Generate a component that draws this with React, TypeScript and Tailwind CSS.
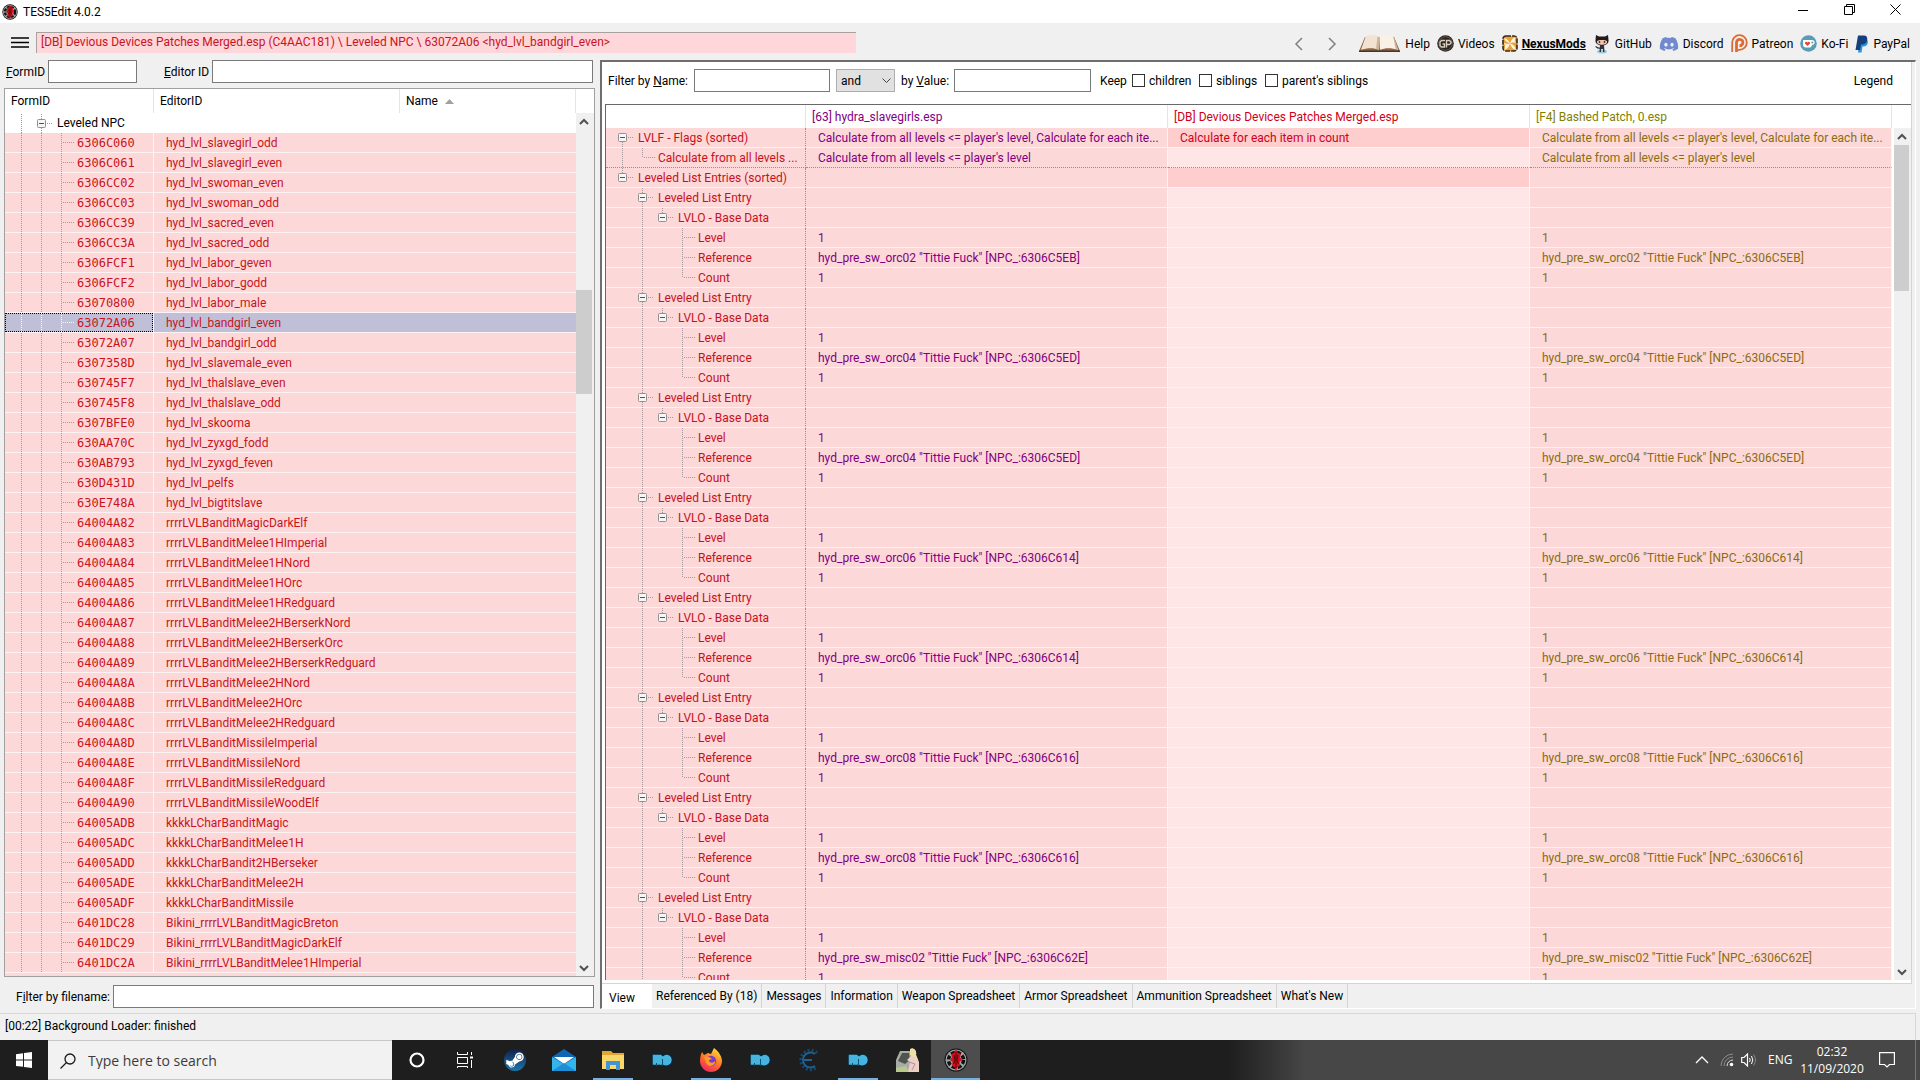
import React from "react";
import clsx from "clsx";
import { FaDiscord, FaSteamSymbol } from "react-icons/fa";

type GuideKind = "blank" | "line" | "tee" | "corner" | "box" | "boxLine" | "boxFirst";

const leveledNpcs: [string, string][] = [
  ["6306C060", "hyd_lvl_slavegirl_odd"],
  ["6306C061", "hyd_lvl_slavegirl_even"],
  ["6306CC02", "hyd_lvl_swoman_even"],
  ["6306CC03", "hyd_lvl_swoman_odd"],
  ["6306CC39", "hyd_lvl_sacred_even"],
  ["6306CC3A", "hyd_lvl_sacred_odd"],
  ["6306FCF1", "hyd_lvl_labor_geven"],
  ["6306FCF2", "hyd_lvl_labor_godd"],
  ["63070800", "hyd_lvl_labor_male"],
  ["63072A06", "hyd_lvl_bandgirl_even"],
  ["63072A07", "hyd_lvl_bandgirl_odd"],
  ["6307358D", "hyd_lvl_slavemale_even"],
  ["630745F7", "hyd_lvl_thalslave_even"],
  ["630745F8", "hyd_lvl_thalslave_odd"],
  ["6307BFE0", "hyd_lvl_skooma"],
  ["630AA70C", "hyd_lvl_zyxgd_fodd"],
  ["630AB793", "hyd_lvl_zyxgd_feven"],
  ["630D431D", "hyd_lvl_pelfs"],
  ["630E748A", "hyd_lvl_bigtitslave"],
  ["64004A82", "rrrrLVLBanditMagicDarkElf"],
  ["64004A83", "rrrrLVLBanditMelee1HImperial"],
  ["64004A84", "rrrrLVLBanditMelee1HNord"],
  ["64004A85", "rrrrLVLBanditMelee1HOrc"],
  ["64004A86", "rrrrLVLBanditMelee1HRedguard"],
  ["64004A87", "rrrrLVLBanditMelee2HBerserkNord"],
  ["64004A88", "rrrrLVLBanditMelee2HBerserkOrc"],
  ["64004A89", "rrrrLVLBanditMelee2HBerserkRedguard"],
  ["64004A8A", "rrrrLVLBanditMelee2HNord"],
  ["64004A8B", "rrrrLVLBanditMelee2HOrc"],
  ["64004A8C", "rrrrLVLBanditMelee2HRedguard"],
  ["64004A8D", "rrrrLVLBanditMissileImperial"],
  ["64004A8E", "rrrrLVLBanditMissileNord"],
  ["64004A8F", "rrrrLVLBanditMissileRedguard"],
  ["64004A90", "rrrrLVLBanditMissileWoodElf"],
  ["64005ADB", "kkkkLCharBanditMagic"],
  ["64005ADC", "kkkkLCharBanditMelee1H"],
  ["64005ADD", "kkkkLCharBandit2HBerseker"],
  ["64005ADE", "kkkkLCharBanditMelee2H"],
  ["64005ADF", "kkkkLCharBanditMissile"],
  ["6401DC28", "Bikini_rrrrLVLBanditMagicBreton"],
  ["6401DC29", "Bikini_rrrrLVLBanditMagicDarkElf"],
  ["6401DC2A", "Bikini_rrrrLVLBanditMelee1HImperial"],
];

const selectedId = "63072A06";

const references = [
  'hyd_pre_sw_orc02 "Tittie Fuck" [NPC_:6306C5EB]',
  'hyd_pre_sw_orc04 "Tittie Fuck" [NPC_:6306C5ED]',
  'hyd_pre_sw_orc04 "Tittie Fuck" [NPC_:6306C5ED]',
  'hyd_pre_sw_orc06 "Tittie Fuck" [NPC_:6306C614]',
  'hyd_pre_sw_orc06 "Tittie Fuck" [NPC_:6306C614]',
  'hyd_pre_sw_orc08 "Tittie Fuck" [NPC_:6306C616]',
  'hyd_pre_sw_orc08 "Tittie Fuck" [NPC_:6306C616]',
  'hyd_pre_sw_misc02 "Tittie Fuck" [NPC_:6306C62E]',
];

interface RecordRow {
  guides: GuideKind[];
  label: string;
  value?: string;
  merged?: string;
  strong?: boolean;
  dotted?: boolean;
}

const recordRows: RecordRow[] = [
  {
    guides: ["boxFirst"],
    label: "LVLF - Flags (sorted)",
    value: "Calculate from all levels <= player's level, Calculate for each ite...",
    merged: "Calculate for each item in count",
    strong: true,
  },
  {
    guides: ["line", "corner"],
    label: "Calculate from all levels ...",
    value: "Calculate from all levels <= player's level",
    dotted: true,
  },
  { guides: ["box"], label: "Leveled List Entries (sorted)", strong: true },
  ...references.flatMap((reference): RecordRow[] => [
    { guides: ["blank", "boxLine"], label: "Leveled List Entry" },
    { guides: ["blank", "line", "box"], label: "LVLO - Base Data" },
    { guides: ["blank", "line", "blank", "tee"], label: "Level", value: "1" },
    { guides: ["blank", "line", "blank", "tee"], label: "Reference", value: reference },
    { guides: ["blank", "line", "blank", "corner"], label: "Count", value: "1" },
  ]),
];

const tabs = [
  "Referenced By (18)",
  "Messages",
  "Information",
  "Weapon Spreadsheet",
  "Armor Spreadsheet",
  "Ammunition Spreadsheet",
  "What's New",
];

const textBox = "h-[23px] border border-[#7a7a7a] bg-white px-1 outline-none";

function Guide({ kind, light }: { kind: GuideKind; light?: boolean }) {
  const isBox = kind.startsWith("box");
  const lines: Record<GuideKind, string> = {
    blank: "",
    line: "M9.5 0V20",
    tee: "M9.5 0V20M11 9.5H23",
    corner: "M9.5 0V10M11 9.5H23",
    box: "M9.5 0V5M15 9.5H20",
    boxLine: "M9.5 0V5M9.5 14V20M15 9.5H20",
    boxFirst: "M9.5 14V20M15 9.5H20",
  };
  return (
    <svg width="20" height="19" className="shrink-0 overflow-visible" aria-hidden="true">
      <path d={lines[kind]} stroke={light ? "#ffffff" : "#a8989c"} strokeDasharray="1 1" fill="none" shapeRendering="crispEdges" />
      {isBox && (
        <>
          <rect x="5.5" y="5.5" width="8" height="8" rx="1" fill="#f6f6f6" stroke="#919191" />
          <path d="M7 9.5H12" stroke="#3a5580" />
        </>
      )}
    </svg>
  );
}

function Chevron({ d, className }: { d: string; className?: string }) {
  return (
    <svg width="10" height="10" viewBox="0 0 10 10" className={className} aria-hidden="true">
      <path d={d} fill="none" stroke="currentColor" strokeWidth="2" />
    </svg>
  );
}

function Scrollbar({ name, thumb }: { name: string; thumb: string }) {
  return (
    <div className="flex min-h-0 flex-1 flex-col items-stretch bg-[#f0f0f0] pr-0.5 text-[#505050]">
      <button aria-label={`Scroll ${name} up`} className="flex h-[17px] shrink-0 items-center justify-center">
        <Chevron d="M1 7L5 3L9 7" />
      </button>
      <div className={clsx("shrink-0 bg-[#cdcdcd]", thumb)} />
      <button aria-label={`Scroll ${name} down`} className="mt-auto flex h-[17px] shrink-0 items-center justify-center">
        <Chevron d="M1 3L5 7L9 3" />
      </button>
    </div>
  );
}

function EditIcon({ size }: { size: number }) {
  return (
    <svg width={size} height={size} viewBox="0 0 24 24" aria-hidden="true">
      <circle cx="12" cy="12" r="11.5" fill="#111" />
      <circle cx="12" cy="12" r="10.5" fill="#9aa5a6" />
      <circle cx="12" cy="12" r="7.5" fill="none" stroke="#15100f" strokeWidth="3.5" strokeDasharray="4 2" />
      <path d="M12 1L14 5L17 6L16 9L18 12L15.500 14L16 18L13.500 19L12 23L10.500 19L8 18L8.500 14L6 12L8 9L7 6L10 5Z" fill="#d3101d" />
      <path d="M10 7L11 12L9.500 16M14 7L13 12L14.500 16M12 4V20" stroke="#4a0508" fill="none" />
    </svg>
  );
}

function BookIcon() {
  return (
    <svg width="43" height="20" viewBox="0 0 44 20" aria-hidden="true">
      <path d="M7 3L1 17.500H43L37 3Z" fill="#8d6444" />
      <path d="M8 2C13 0 19 1 22 3L21.500 16C16 13.500 9 14 3 16Z" fill="#f1e2d2" />
      <path d="M36 2C31 0 25 1 22 3L22.500 16C28 13.500 35 14 41 16Z" fill="#f9f0e6" />
      <path d="M22 3L20 2.500L18.500 14.500L21.500 16ZM36 2L37 3L41 16L38.500 15Z" fill="#cdb497" />
      <path d="M1 17.500H43" stroke="#4e3424" strokeWidth="1.500" />
    </svg>
  );
}

function VideosIcon() {
  return (
    <svg width="17" height="17" viewBox="0 0 17 17" aria-hidden="true">
      <circle cx="8.500" cy="8.500" r="8.300" fill="#2c2621" />
      <circle cx="8.500" cy="8.500" r="6.800" fill="none" stroke="#6b6258" strokeWidth=".8" />
      <path d="M8 5.500H4.500L3 7V10.500L4.500 12H7.500V9H5.500M9.500 12.500V5.500H12.500L14 7V8L12.500 9.500H10" fill="none" stroke="#d8cfc0" strokeWidth="1.400" />
    </svg>
  );
}

function NexusIcon() {
  return (
    <svg width="16" height="17" viewBox="0 0 16 17" aria-hidden="true">
      <rect x="1" y="1" width="14" height="15" rx="3" fill="#e9a23c" stroke="#3a2a18" strokeWidth="1.600" strokeDasharray="5 1" />
      <path d="M2 3C6 4 7 7 8 8.500C9 6 10 3 14 2C12 5 13 6 14 8C11 7 9.500 8 8 8.500C11 9 13 11 14 15C10 14 9 11 8 8.500C7 11 6 14 2 15C4 12 3 10 2 8C5 9 6 9 8 8.500C5 7 3 6 2 3Z" fill="#fff3dc" />
    </svg>
  );
}

function OctocatIcon() {
  return (
    <svg width="18" height="20" viewBox="0 0 18 20" aria-hidden="true">
      <ellipse cx="9" cy="17.500" rx="5" ry="2" fill="#9ccbe0" />
      <path d="M3 1L6 2.500H12L15 1L15.500 6C16 10 12 11.500 9 11.500S2 10 2.500 6Z" fill="#1f1a1c" />
      <path d="M4 7C5 5.500 13 5.500 14 7C14.500 10 12 10.700 9 10.700S3.500 10 4 7Z" fill="#f0c5ac" />
      <path d="M6.500 7V9M11.500 7V9" stroke="#5a2a24" strokeWidth="1.400" />
      <path d="M7 11H11L11.500 18H10V15H8V18H6.500Z" fill="#2b3238" />
      <path d="M7 14C4 15 4 12.500 2.500 12.500" stroke="#2b3238" strokeWidth="1.200" fill="none" />
    </svg>
  );
}

function PatreonIcon() {
  return (
    <svg width="17" height="19" viewBox="0 0 17 19" aria-hidden="true">
      <path d="M1.200 18V8.500A7.300 7.300 0 1 1 8.500 15.800H7" fill="none" stroke="#dd6a34" strokeWidth="1.800" />
      <path d="M5.500 18V8.500A3.200 3.200 0 1 1 8.500 11.700" fill="none" stroke="#dd6a34" strokeWidth="2.800" />
    </svg>
  );
}

function KofiIcon() {
  return (
    <svg width="17" height="17" viewBox="0 0 17 17" aria-hidden="true">
      <circle cx="8.500" cy="8.500" r="8.300" fill="#5b9cb5" />
      <path d="M3 5H12C15.500 5 15.500 10 12 10C11.500 12 10.500 12.500 9 12.500H6C4 12.500 3 11.500 3 9.500Z" fill="#fff" />
      <circle cx="12.300" cy="7.500" r="1" fill="#5b9cb5" />
      <path d="M7.500 11L5 8.500C4.500 7 6.500 6 7.500 7.500C8.500 6 10.500 7 10 8.500Z" fill="#e2453f" />
    </svg>
  );
}

function PaypalIcon() {
  return (
    <svg width="14" height="18" viewBox="0 0 14 18" aria-hidden="true">
      <path d="M5 4H11C14 5 13.500 11 9 11.500H7.500L6.500 17.500H3Z" fill="#2a94d6" />
      <path d="M3 .5H9C12.500 .5 13 4 11.500 7C10.500 9 8.500 9.500 6 9.500L5 15H.5Z" fill="#173f7d" />
    </svg>
  );
}

const links: { label: string; icon: React.ReactNode; className?: string }[] = [
  { label: "Help", icon: <BookIcon /> },
  { label: "Videos", icon: <VideosIcon /> },
  { label: "NexusMods", icon: <NexusIcon />, className: "font-bold underline" },
  { label: "GitHub", icon: <OctocatIcon /> },
  { label: "Discord", icon: <FaDiscord size={20} className="text-[#7289d0]" /> },
  { label: "Patreon", icon: <PatreonIcon /> },
  { label: "Ko-Fi", icon: <KofiIcon /> },
  { label: "PayPal", icon: <PaypalIcon /> },
];

function TitleBar() {
  return (
    <header className="flex h-[23px] shrink-0 items-center bg-white pr-0.5 pl-0.5">
      <EditIcon size={16} />
      <h1 className="ml-[5px]">TES5Edit 4.0.2</h1>
      <div className="ml-auto flex h-full items-start pt-1">
        <button aria-label="Minimize" className="flex w-[46px] justify-center">
          <svg width="10" height="11"><path d="M0 6.500H10" stroke="#000" /></svg>
        </button>
        <button aria-label="Restore" className="flex w-[46px] justify-center">
          <svg width="11" height="11"><path d="M.5 2.500H8.500V10.500H.5ZM2.500 2.500V.5H10.500V8.500H8.500" fill="none" stroke="#000" /></svg>
        </button>
        <button aria-label="Close" className="flex w-[46px] justify-center">
          <svg width="11" height="11"><path d="M.5 .5L10.500 10.500M10.500 .5L.5 10.500" stroke="#000" /></svg>
        </button>
      </div>
    </header>
  );
}

function Toolbar() {
  return (
    <div className="flex h-[37px] shrink-0 items-center pt-0.5 pr-2.5 pl-[11px]">
      <button aria-label="Menu" className="mr-[7px]">
        <svg width="18" height="11"><path d="M0 1H18M0 5.500H18M0 10H18" stroke="#000" strokeWidth="1.300" /></svg>
      </button>
      <div className="h-[21px] w-[820px] truncate border-t border-l border-[#a9a0a0] bg-[#ffd6d9] pl-1 leading-[18px] text-[#c8141e]">
        [DB] Devious Devices Patches Merged.esp (C4AAC181) \ Leveled NPC \ 63072A06 &lt;hyd_lvl_bandgirl_even&gt;
      </div>
      <nav className="ml-auto flex items-center gap-[7px] pt-0.5">
        <button aria-label="Back" className="mr-[18px] text-[#808080]">
          <svg width="9" height="14"><path d="M8 1L2 7L8 13" fill="none" stroke="currentColor" strokeWidth="1.500" /></svg>
        </button>
        <button aria-label="Forward" className="mr-[14px] text-[#808080]">
          <svg width="9" height="14"><path d="M1 1L7 7L1 13" fill="none" stroke="currentColor" strokeWidth="1.500" /></svg>
        </button>
        {links.map((link) => (
          <a key={link.label} href="#" className={clsx("flex items-center gap-1", link.className)}>
            {link.icon}
            {link.label}
          </a>
        ))}
      </nav>
    </div>
  );
}

function NavigationPane() {
  return (
    <section className="flex w-[31.25%] shrink-0 flex-col pb-[5px]">
      <div className="flex items-center pr-[7px] pl-1.5">
        <label htmlFor="form-id" className="w-[42px]"><u>F</u>ormID</label>
        <input id="form-id" className={clsx(textBox, "w-[89px]")} />
        <label htmlFor="editor-id" className="ml-[27px] w-12"><u>E</u>ditor ID</label>
        <input id="editor-id" className={clsx(textBox, "min-w-0 flex-1")} />
      </div>

      <div className="mt-[5px] mr-[5px] ml-1 flex min-h-0 flex-1 overflow-hidden border border-[#a0a0a0] bg-white">
        <div className="min-w-0 flex-1 overflow-hidden">
          <table className="w-full table-fixed border-separate border-spacing-0">
            <colgroup>
              <col className="w-[149px]" />
              <col className="w-[246px]" />
              <col />
            </colgroup>
            <thead>
              <tr className="h-6 text-left">
                <th className="border-r border-[#e5e5e5] pl-1.5 font-normal">FormID</th>
                <th className="border-r border-[#e5e5e5] pl-1.5 font-normal">EditorID</th>
                <th className="border-r border-[#e5e5e5] pl-1.5 font-normal">
                  Name
                  <svg width="9" height="5" className="ml-[7px] inline-block align-middle"><path d="M0 5L4.500 0L9 5Z" fill="#a0a0a0" /></svg>
                </th>
              </tr>
            </thead>
            <tbody>
              <tr className="h-5">
                <td colSpan={3} className="p-0">
                  <div className="flex h-5 items-center pl-[7px]">
                    <Guide kind="line" />
                    <Guide kind="boxLine" />
                    <span className="pl-[5px]">Leveled NPC</span>
                  </div>
                </td>
              </tr>
              {leveledNpcs.map(([id, editorId]) => {
                const selected = id === selectedId;
                return (
                  <tr key={id} className={clsx("text-[#c8141e]", selected ? "bg-[#bfbfd8]" : "bg-[#fdd8d8]")}>
                    <td className="border-r border-b border-[#fff2f2] p-0">
                      <div className={clsx("flex h-[19px] items-center", selected ? "border border-dotted border-black pl-1.5" : "pl-[7px]")}>
                        <Guide kind="line" light={selected} />
                        <Guide kind="line" light={selected} />
                        <Guide kind="tee" light={selected} />
                        <span className="pl-[5px] font-['DejaVu_Sans_Mono',monospace]">{id}</span>
                      </div>
                    </td>
                    <td colSpan={2} className="truncate border-b border-[#fff2f2] py-0 pl-3">{editorId}</td>
                  </tr>
                );
              })}
              <tr className="h-5 bg-[#fdd8d8]">
                <td colSpan={3} />
              </tr>
            </tbody>
          </table>
        </div>
        <div className="flex w-[18px] shrink-0 flex-col pt-6">
          <Scrollbar name="records" thumb="mt-[160px] h-[104px]" />
        </div>
      </div>

      <div className="mt-2 flex items-center pr-1.5 pl-4">
        <label htmlFor="file-filter" className="w-[97px]">F<u>i</u>lter by filename:</label>
        <input id="file-filter" className={clsx(textBox, "min-w-0 flex-1")} />
      </div>
    </section>
  );
}

function FilterBar() {
  return (
    <div className="flex h-[42px] shrink-0 items-center pr-[18px] pb-[5px] pl-1.5">
      <label htmlFor="by-name" className="w-[86px]">Filter by <u>N</u>ame:</label>
      <input id="by-name" className={clsx(textBox, "w-[136px]")} />
      <div className="relative ml-1.5">
        <select aria-label="Combine filters" className="h-[23px] w-[59px] appearance-none border border-[#adadad] bg-[#e1e1e1] pl-1 outline-none">
          <option>and</option>
          <option>or</option>
        </select>
        <svg width="9" height="6" className="pointer-events-none absolute top-[9px] right-1"><path d="M.5 .5L4.500 4.500L8.500 .5" fill="none" stroke="#444" /></svg>
      </div>
      <label htmlFor="by-value" className="ml-1.5 w-[53px]">by <u>V</u>alue:</label>
      <input id="by-value" className={clsx(textBox, "w-[137px]")} />
      <span className="ml-[9px] w-8">Keep</span>
      {[
        ["children", "w-[67px]"],
        ["siblings", "w-[66px]"],
        ["parent's siblings", ""],
      ].map(([name, width]) => (
        <label key={name} className={clsx("flex items-center gap-1", width)}>
          <input type="checkbox" className="size-[13px] shrink-0 appearance-none border border-[#333] bg-white" />
          {name}
        </label>
      ))}
      <button className="ml-auto">Legend</button>
    </div>
  );
}

function RecordView() {
  return (
    <div className="ml-[3px] flex min-h-0 flex-1 overflow-hidden border-t border-l border-[#696969]">
      <div className="min-w-0 flex-1 overflow-hidden">
        <table className="w-full table-fixed border-separate border-spacing-0">
          <colgroup>
            <col className="w-[200px]" />
            <col />
            <col />
            <col />
          </colgroup>
          <thead>
            <tr className="h-[23px] text-left">
              <th className="border-r border-[#e5e5e5]" />
              <th className="border-r border-[#e5e5e5] py-0 pl-1.5 font-normal text-[#800080]">[63] hydra_slavegirls.esp</th>
              <th className="border-r border-[#e5e5e5] py-0 pl-1.5 font-normal text-[#d00018]">[DB] Devious Devices Patches Merged.esp</th>
              <th className="border-r border-[#e5e5e5] py-0 pl-1.5 font-normal text-[#808000]">[F4] Bashed Patch, 0.esp</th>
            </tr>
          </thead>
          <tbody>
            {recordRows.map((row, index) => {
              const line = row.dotted ? "border-b border-b-[#a08c90] [border-bottom-style:dotted]" : "border-b border-b-[#fff2f2]";
              return (
                <tr key={index} className="bg-[#fdd8d8]">
                  <td className={clsx(line, "border-r border-r-[#a08c90] p-0 text-[#c8101c] [border-right-style:dotted]")}>
                    <div className="flex h-[19px] items-center pl-[7px]">
                      {row.guides.map((kind, level) => (
                        <Guide key={level} kind={kind} />
                      ))}
                      <span className="truncate pl-[5px]">{row.label}</span>
                    </div>
                  </td>
                  <td className={clsx(line, "truncate border-r border-r-[#fff2f2] py-0 pl-3 text-[#800080]")}>{row.value}</td>
                  <td className={clsx(line, "truncate border-r border-r-[#fff2f2] py-0 pl-3 text-[#d00018]", row.strong ? "bg-[#fecdce]" : "bg-[#ffe6e6]")}>
                    {row.merged}
                  </td>
                  <td className={clsx(line, "truncate border-r border-r-[#fff2f2] py-0 pl-3 text-[#8a6d10]")}>{row.value}</td>
                </tr>
              );
            })}
          </tbody>
        </table>
      </div>
      <div className="flex w-[19px] shrink-0 flex-col pt-[23px] pl-0.5">
        <Scrollbar name="view" thumb="h-[146px]" />
      </div>
    </div>
  );
}

function ViewPane() {
  return (
    <section className="mr-1 mb-1 flex min-w-0 flex-1 flex-col border-t-2 border-r border-b border-l-2 border-[#6e6e6e] border-r-white border-b-white">
      <div className="mr-[3px] flex min-h-0 flex-1 flex-col border-r border-b border-[#d4d4d4] bg-white pb-[3px]">
        <FilterBar />
        <RecordView />
      </div>
      <div role="tablist" className="flex h-6 shrink-0">
        <button role="tab" aria-selected="true" className="w-[50px] bg-white pt-1 pl-[7px] text-left">View</button>
        {tabs.map((tab) => (
          <button key={tab} role="tab" aria-selected="false" className="border-r border-[#d4d4d4] px-1 first-of-type:pl-0">
            {tab}
          </button>
        ))}
      </div>
    </section>
  );
}

function MoIcon() {
  return (
    <svg width="24" height="18" viewBox="0 0 24 18" aria-hidden="true">
      <path d="M2 3H11L13 4.500C18 1 22.500 4.500 22.500 9C22.500 14 17 16.500 13 14.500H2Z" fill="#47b4e0" stroke="#0b2430" strokeWidth="1.500" />
      <path d="M6.500 12V15M12.500 8V15" stroke="#12506a" />
    </svg>
  );
}

function CreationKitIcon() {
  return (
    <svg width="22" height="24" viewBox="0 0 22 24" fill="none" aria-hidden="true">
      <path d="M19 5A9.500 9.500 0 1 0 19 19" stroke="#17466b" strokeWidth="3.500" strokeDasharray="2 2" />
      <path d="M17 6A7.500 7.500 0 1 0 17 18M5 12H14" stroke="#1b6295" strokeWidth="1.800" />
    </svg>
  );
}

const taskbarApps: { name: string; icon: React.ReactNode; open?: boolean; active?: boolean }[] = [
  {
    name: "Cortana",
    icon: <svg width="18" height="18"><circle cx="9" cy="9" r="6.500" fill="none" stroke="#fff" strokeWidth="2.200" /></svg>,
  },
  {
    name: "Task View",
    icon: (
      <svg width="17" height="16" fill="none" stroke="#fff">
        <path d="M.5 0V2.500H10.500V0M.5 5.500H10.500V11.500H.5ZM.5 16V14.500H10.500V16M14.500 0V3M14.500 8V16" />
        <path d="M13 5.500H16" strokeWidth="2" />
      </svg>
    ),
  },
  {
    name: "Steam",
    icon: (
      <span className="flex size-[22px] items-center justify-center rounded-full bg-linear-to-b from-[#10214c] to-[#1b78ac]">
        <FaSteamSymbol size={20} className="text-white" />
      </span>
    ),
  },
  {
    name: "Mail",
    icon: (
      <svg width="24" height="22" viewBox="0 0 24 22">
        <path d="M0 8L12 0L24 8V12H0Z" fill="#1066b4" />
        <path d="M2 8H22L12 15Z" fill="#fff" />
        <path d="M0 8L12 15L24 8V22H0Z" fill="#33b4ea" />
        <path d="M0 22L12 14L24 22Z" fill="#1d8fd6" />
      </svg>
    ),
  },
  {
    name: "File Explorer",
    open: true,
    icon: (
      <svg width="22" height="19" viewBox="0 0 22 19">
        <path d="M0 0H9L11 2H22V18H0Z" fill="#e3a72f" />
        <path d="M0 4H22V18H0Z" fill="#fbd66b" />
        <path d="M4 19V10H18V19H14V14H8V19Z" fill="#3f96d2" />
      </svg>
    ),
  },
  { name: "Mod Organizer", icon: <MoIcon /> },
  {
    name: "Firefox",
    open: true,
    icon: (
      <svg width="24" height="24" viewBox="0 0 24 24">
        <defs>
          <linearGradient id="fox" x1=".8" y1="0" x2=".3" y2="1">
            <stop offset="0" stopColor="#ffe23d" />
            <stop offset=".5" stopColor="#ff7a26" />
            <stop offset="1" stopColor="#f0265f" />
          </linearGradient>
        </defs>
        <path d="M3 4L5 7L9 5L12 6C13 4 14 2 15 0C19 3 23 8 23 13A11 11 0 0 1 1 13C1 9 2 6 3 4Z" fill="url(#fox)" />
        <circle cx="12" cy="13" r="5.200" fill="#7a3ccf" />
        <path d="M5 9C8 8 11 9 13 11L10 12C10 15 14 16 16 13C17 18 9 20 7 15Z" fill="#ff9a2a" />
      </svg>
    ),
  },
  { name: "Mod Organizer profile", icon: <MoIcon /> },
  { name: "Creation Kit", icon: <CreationKitIcon /> },
  { name: "Mod Organizer tools", icon: <MoIcon />, open: true },
  {
    name: "BodySlide",
    icon: (
      <svg width="24" height="24" viewBox="0 0 24 24">
        <path d="M1 23V12L5 3H15L17 10V23Z" fill="#a9aca6" />
        <path d="M3 13L7 5H14L15 12L10 16Z" fill="#4e554f" />
        <path d="M1 20L11 18L14 24H1Z" fill="#b9c98b" />
        <path d="M15 1C19 -1 22 3 21 7L24 14V24H13L15 14L12 12L16 8Z" fill="#ecd0c6" />
        <path d="M15 1C19 -1 22 3 21 7L23 12L19 9L15 7Z" fill="#efe0a8" />
        <path d="M14 14L20 16L17 22" stroke="#b98a9b" fill="none" />
      </svg>
    ),
  },
  { name: "TES5Edit", icon: <EditIcon size={24} />, open: true, active: true },
];

function Taskbar() {
  return (
    <footer className="flex h-10 shrink-0 items-stretch bg-linear-to-r from-[#1e1e1e] from-64% to-[#474747] to-68% font-['Open_Sans','Noto_Sans',sans-serif] text-white">
      <button aria-label="Start" className="flex w-12 items-center justify-center">
        <svg width="16" height="16" fill="#fff"><path d="M0 2.200L7 1.200V7.600H0ZM8 1L16 0V7.600H8ZM0 8.500H7V14.800L0 13.900ZM8 8.500H16V16L8 15Z" /></svg>
      </button>
      <label className="flex w-[344px] items-center gap-3 border-y border-[#c8c8c8] bg-[#f2f2f2] pt-0.5 pl-3">
        <svg width="16" height="16" fill="none" stroke="#1a1a1a" strokeWidth="1.300">
          <circle cx="10" cy="6" r="5" />
          <path d="M6.500 9.500L.5 15.500" />
        </svg>
        <input
          aria-label="Search"
          placeholder="Type here to search"
          className="min-w-0 flex-1 bg-transparent text-[14px] outline-none placeholder:text-[#3c3c3c]"
        />
      </label>
      {taskbarApps.map((app) => (
        <button
          key={app.name}
          aria-label={app.name}
          className={clsx("flex w-[49px] flex-col items-center", app.active && "bg-[#4d4d4d]")}
        >
          <span className="flex flex-1 items-center pt-0.5">{app.icon}</span>
          <span className={clsx("h-0.5", app.active ? "w-full" : "w-10", app.open && "bg-[#76b0e6]")} />
        </button>
      ))}
      <div className="ml-auto flex items-center">
        <button aria-label="Show hidden icons" className="mr-[11px]">
          <svg width="14" height="8"><path d="M1 7L7 1L13 7" fill="none" stroke="#fff" strokeWidth="1.300" /></svg>
        </button>
        <svg width="14" height="14" fill="none" className="mr-[7px]" aria-hidden="true">
          <path d="M1 13A12 12 0 0 1 13 1M4 13A9 9 0 0 1 13 4" stroke="#8c8c8c" />
          <path d="M7 13A6 6 0 0 1 13 7" stroke="#ddd" />
          <circle cx="11.500" cy="11.500" r="1.800" fill="#fff" />
        </svg>
        <svg width="17" height="14" fill="none" className="mr-[10px]" aria-hidden="true">
          <path d="M.7 4.500H3L6.500 1V13L3 9.500H.7Z" stroke="#fff" strokeWidth="1.200" />
          <path d="M8.500 5Q10 7 8.500 9M10.500 3Q13 7 10.500 11" stroke="#fff" />
          <path d="M12.500 1.500Q16.500 7 12.500 12.500" stroke="#888" />
        </svg>
        <span className="w-[25px]">ENG</span>
        <time className="w-[78px] text-center leading-[17px]">
          02:32
          <br />
          11/09/2020
        </time>
        <button aria-label="Notifications" className="ml-2">
          <svg width="16" height="16" fill="none" stroke="#fff" strokeWidth="1.200"><path d="M.6 .6H15.400V12.500H10.500L8 15L5.500 12.500H.6Z" /></svg>
        </button>
        <div className="ml-5 h-10 w-[5px] border-l border-[#777]" />
      </div>
    </footer>
  );
}

function App() {
  return (
    <div className="flex h-screen flex-col overflow-hidden bg-[#f0f0f0] font-['Roboto','Noto_Sans',sans-serif] text-[12px] leading-4 text-black">
      <TitleBar />
      <Toolbar />
      <main className="flex min-h-0 flex-1">
        <NavigationPane />
        <ViewPane />
      </main>
      <div role="status" className="mr-1 h-[27px] shrink-0 border-t border-r border-[#d7d7d7] pl-[5px] leading-[25px]">
        [00:22] Background Loader: finished
      </div>
      <Taskbar />
    </div>
  );
}

export default App;
